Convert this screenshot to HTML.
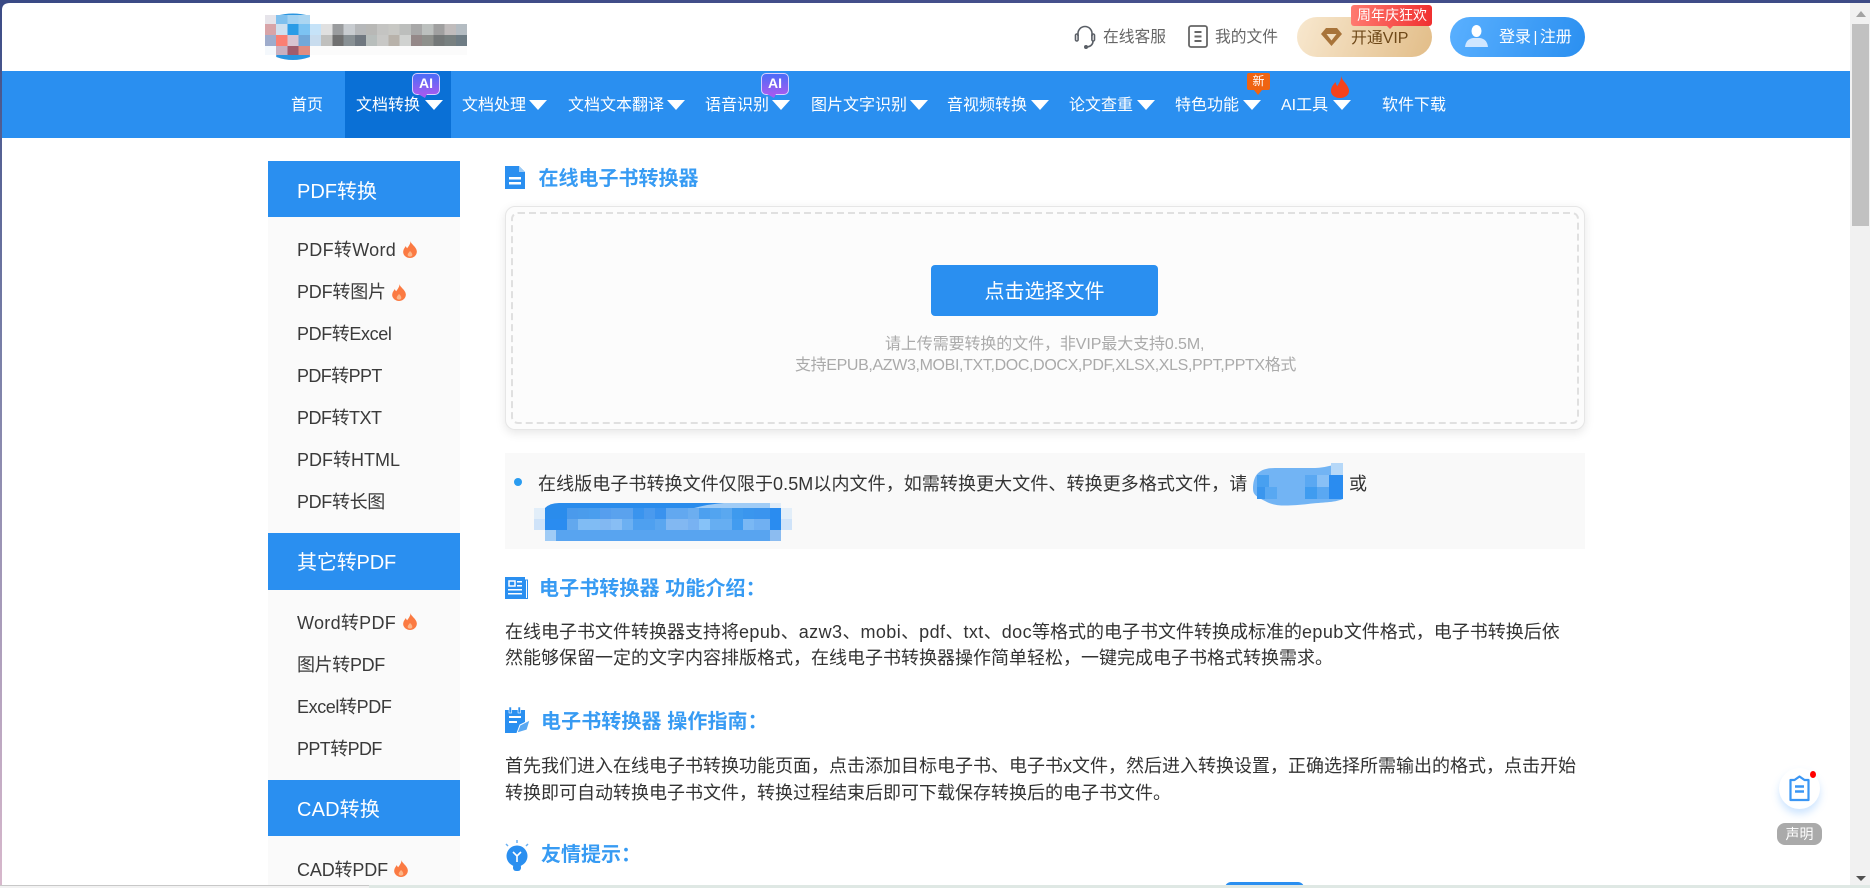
<!DOCTYPE html>
<html lang="zh"><head><meta charset="utf-8"><title>在线电子书转换器</title>
<style>
html,body{margin:0;padding:0;width:1870px;height:888px;overflow:hidden;background:#fff}
body{position:relative;font-family:"Liberation Sans","Noto Sans CJK SC",sans-serif;color:#333}
.a{position:absolute}
.t{position:absolute;white-space:nowrap}
.nav{color:#fff;font-size:16px;line-height:24px;top:94px}
.tri{position:absolute;top:100px;width:0;height:0;border-left:9px solid transparent;border-right:9px solid transparent;border-top:10px solid #fff}
.sh{position:absolute;left:268px;width:192px;background:#2a8ff0}
.st{position:absolute;left:297px;color:#fff;font-size:20px;line-height:30px;white-space:nowrap}
.si{position:absolute;left:297px;font-size:18px;line-height:26px;color:#3a3a3a;white-space:nowrap}
.h{position:absolute;font-size:20px;font-weight:700;color:#379bf3;line-height:28px;white-space:nowrap}
.p{position:absolute;left:505px;font-size:18px;line-height:26px;color:#333;white-space:nowrap}
.p span{letter-spacing:.42px}
.h2{position:absolute;font-size:16px;line-height:22px;color:#aaa;white-space:nowrap}
</style></head><body>

<!-- window frame -->
<div class="a" style="left:0;top:0;width:1870px;height:3px;background:linear-gradient(90deg,#3a4a85,#46508c 60%,#3d4b86)"></div>
<div class="a" style="left:0;top:0;width:2px;height:888px;background:linear-gradient(180deg,#3a4a85,#7a80a8 40%,#d8b8cc)"></div>
<svg class="a" style="left:0;top:0" width="10" height="10"><path d="M0 0H10V3Q2 3 2 10H0Z" fill="#3a4a85"/></svg>

<!-- logo mosaic -->
<svg class="a" style="left:265px;top:13px" width="202" height="47" viewBox="0 0 198 47" preserveAspectRatio="none" shape-rendering="crispEdges">
<path d="M11 3Q27 -2 44 3V44Q27 50 11 44Z" fill="#2a95e0" shape-rendering="auto"/>
<g>
<rect x="0" y="2" width="11" height="9" fill="#e6e4ea"/><rect x="11" y="2" width="11" height="9" fill="#7fc0ee"/><rect x="22" y="2" width="11" height="9" fill="#a3d2f2"/><rect x="33" y="2" width="11" height="9" fill="#acd6f2"/>
</g>
<g id="r1">
<rect x="0" y="11" width="11" height="11" fill="#d8a4a8"/><rect x="11" y="11" width="11" height="11" fill="#cfe0ef"/><rect x="22" y="11" width="11" height="11" fill="#2b9ce6"/><rect x="33" y="11" width="11" height="11" fill="#7cc3f2"/><rect x="44" y="11" width="11" height="11" fill="#c6e3f8"/><rect x="55" y="11" width="11" height="11" fill="#e0e0e0"/><rect x="66" y="11" width="11" height="11" fill="#9a9c9e"/><rect x="77" y="11" width="11" height="11" fill="#c8ccd0"/><rect x="88" y="11" width="11" height="11" fill="#b6b8ba"/><rect x="99" y="11" width="11" height="11" fill="#b8b8b6"/><rect x="110" y="11" width="11" height="11" fill="#c4c4c2"/><rect x="121" y="11" width="11" height="11" fill="#c8c8c4"/><rect x="132" y="11" width="11" height="11" fill="#bcbebc"/><rect x="143" y="11" width="11" height="11" fill="#a8a8a8"/><rect x="154" y="11" width="11" height="11" fill="#bcc0be"/><rect x="165" y="11" width="11" height="11" fill="#a0a0a0"/><rect x="176" y="11" width="11" height="11" fill="#c0bcbc"/><rect x="187" y="11" width="11" height="11" fill="#b4bcc2"/>
</g>
<g id="r2">
<rect x="0" y="22" width="11" height="11" fill="#9eaccc"/><rect x="11" y="22" width="11" height="11" fill="#fb7f72"/><rect x="22" y="22" width="11" height="11" fill="#d8c4d0"/><rect x="33" y="22" width="11" height="11" fill="#72a8d8"/><rect x="44" y="22" width="11" height="11" fill="#c8dcee"/><rect x="55" y="22" width="11" height="11" fill="#c0c0be"/><rect x="66" y="22" width="11" height="11" fill="#707070"/><rect x="77" y="22" width="11" height="11" fill="#889094"/><rect x="88" y="22" width="11" height="11" fill="#707880"/><rect x="99" y="22" width="11" height="11" fill="#b8bebc"/><rect x="110" y="22" width="11" height="11" fill="#c8c8c6"/><rect x="121" y="22" width="11" height="11" fill="#b8b2aa"/><rect x="132" y="22" width="11" height="11" fill="#d0d2d0"/><rect x="143" y="22" width="11" height="11" fill="#948888"/><rect x="154" y="22" width="11" height="11" fill="#8e908c"/><rect x="165" y="22" width="11" height="11" fill="#747878"/><rect x="176" y="22" width="11" height="11" fill="#788080"/><rect x="187" y="22" width="11" height="11" fill="#6e7c84"/>
</g>
<rect x="0" y="33" width="11" height="9" fill="#f4f8fc"/><rect x="11" y="33" width="11" height="9" fill="#c8b0c0"/><rect x="22" y="33" width="11" height="9" fill="#a05c6c"/><rect x="33" y="33" width="11" height="9" fill="#e08c80"/><rect x="44" y="33" width="154" height="9" fill="#fbfbfb"/>
</svg>

<!-- top right -->
<svg class="a" style="left:1074px;top:25px" width="22" height="24" viewBox="0 0 22 24" fill="none" stroke="#5a5f66" stroke-width="1.600"><path d="M4 11V8.500a7 7 0 0 1 14 0V11"/><rect x="1.500" y="9" width="2.600" height="7" rx="1.300"/><rect x="17.900" y="9" width="2.600" height="7" rx="1.300"/><path d="M19 16q0 5-6 6"/><circle cx="12" cy="22" r="1.200" fill="#5a5f66"/></svg>
<div class="t" style="left:1103px;top:26px;font-size:15.75px;line-height:24px;color:#666">在线客服</div>
<svg class="a" style="left:1188px;top:25px" width="20" height="23" viewBox="0 0 20 23" fill="none" stroke="#666" stroke-width="1.800"><rect x="1" y="1" width="18" height="21" rx="2"/><path d="M6.500 7h7M6.500 11.500h7M6.500 16h7" stroke-width="2"/></svg>
<div class="t" style="left:1215px;top:26px;font-size:15.75px;line-height:24px;color:#666">我的文件</div>

<div class="a" style="left:1297px;top:17px;width:135px;height:40px;border-radius:20px;background:linear-gradient(110deg,#f8e8cf,#e2bd88)"></div>
<svg class="a" style="left:1321px;top:28px" width="21" height="18" viewBox="0 0 21 18"><path d="M5 0H16L21 6 10.500 18 0 6Z" fill="#a8743a"/><path d="M5.500 6H15.500L10.500 12.500Z" fill="#f3dfc0"/></svg>
<div class="t" style="left:1351px;top:27px;font-size:16px;line-height:24px;color:#6e4818;letter-spacing:-.1px">开通VIP</div>
<div class="a" style="left:1351px;top:5px;width:81px;height:21px;border-radius:3px;background:linear-gradient(90deg,#ff7a70,#f03030)"></div>
<div class="a" style="left:1387px;top:26px;width:0;height:0;border-left:3px solid transparent;border-right:3px solid transparent;border-top:3px solid #f55"></div>
<div class="t" style="left:1357px;top:5px;font-size:14px;line-height:21px;color:#fff">周年庆狂欢</div>

<div class="a" style="left:1450px;top:17px;width:135px;height:40px;border-radius:20px;background:linear-gradient(110deg,#5ab0ff,#2a8ff0)"></div>
<svg class="a" style="left:1464px;top:25px" width="25" height="22" viewBox="0 0 25 22"><ellipse cx="12.500" cy="6" rx="5" ry="6" fill="#fff"/><path d="M1 22q1-8 8-9h7q7 1 8 9Z" fill="#cfe6ff"/></svg>
<div class="t" style="left:1499px;top:26px;font-size:16px;line-height:24px;color:#fff">登录<span style="margin:0 2.500px;font-size:15px">|</span>注册</div>

<!-- nav -->
<div class="a" style="left:2px;top:71px;width:1848px;height:67px;background:#2a8ff0"></div>
<div class="a" style="left:345px;top:71px;width:106px;height:67px;background:#0a70d6"></div>
<div class="t nav" style="left:291px">首页</div>
<div class="t nav" style="left:356px">文档转换</div><div class="tri" style="left:425px"></div>
<div class="t nav" style="left:462px">文档处理</div><div class="tri" style="left:529px"></div>
<div class="t nav" style="left:568px">文档文本翻译</div><div class="tri" style="left:667px"></div>
<div class="t nav" style="left:705px">语音识别</div><div class="tri" style="left:772px"></div>
<div class="t nav" style="left:811px">图片文字识别</div><div class="tri" style="left:910px"></div>
<div class="t nav" style="left:947px">音视频转换</div><div class="tri" style="left:1031px"></div>
<div class="t nav" style="left:1069px">论文查重</div><div class="tri" style="left:1137px"></div>
<div class="t nav" style="left:1175px">特色功能</div><div class="tri" style="left:1243px"></div>
<div class="t nav" style="left:1281px">AI工具</div><div class="tri" style="left:1333px"></div>
<div class="t nav" style="left:1382px">软件下载</div>

<!-- AI badges -->
<div class="a" style="left:412px;top:73px;width:26px;height:20px;border:1px solid #d8d0ff;border-radius:5px;background:linear-gradient(180deg,#4a6cf8,#a25cf0);box-sizing:content-box"></div>
<div class="a" style="left:418px;top:94px;width:0;height:0;border-left:7px solid transparent;border-right:2px solid transparent;border-top:4px solid #a25cf0"></div>
<div class="t" style="left:412px;top:73px;width:28px;text-align:center;font-size:14px;font-weight:700;line-height:21px;color:#fff">AI</div>
<div class="a" style="left:761px;top:73px;width:26px;height:20px;border:1px solid #d8d0ff;border-radius:5px;background:linear-gradient(180deg,#4a6cf8,#a25cf0)"></div>
<div class="a" style="left:767px;top:94px;width:0;height:0;border-left:7px solid transparent;border-right:2px solid transparent;border-top:4px solid #a25cf0"></div>
<div class="t" style="left:761px;top:73px;width:28px;text-align:center;font-size:14px;font-weight:700;line-height:21px;color:#fff">AI</div>

<!-- new badge -->
<div class="a" style="left:1247px;top:73px;width:23px;height:17px;background:#ef6412;border-radius:2px"></div>
<div class="a" style="left:1254px;top:90px;width:0;height:0;border-left:4px solid transparent;border-right:4px solid transparent;border-top:5px solid #ef6412"></div>
<div class="t" style="left:1247px;top:73px;width:23px;text-align:center;font-size:12px;line-height:17px;color:#fff">新</div>
<!-- flame -->
<svg class="a" style="left:1330px;top:75px" width="20" height="23" viewBox="0 0 20 23"><path d="M11 0C11 5 18 9 19 15 19.500 20 15 23 10 23S.5 20 1 15C1.500 11 4 9 5.500 7 6 9 6.500 10.500 7.500 11 9 8 11.500 5 11 0Z" fill="#f4431c"/></svg>

<!-- sidebar -->
<div class="a" style="left:268px;top:161px;width:192px;height:727px;background:#fafafa"></div>
<div class="sh" style="top:161px;height:56px"></div>
<div class="st" style="top:177px">PDF转换</div>
<div class="si" style="top:237px;letter-spacing:.3px">PDF转Word</div>
<div class="si" style="top:279px;letter-spacing:-.2px">PDF转图片</div>
<div class="si" style="top:321px;letter-spacing:-.4px">PDF转Excel</div>
<div class="si" style="top:363px;letter-spacing:-.6px">PDF转PPT</div>
<div class="si" style="top:405px;letter-spacing:-.5px">PDF转TXT</div>
<div class="si" style="top:447px">PDF转HTML</div>
<div class="si" style="top:489px;letter-spacing:-.35px">PDF转长图</div>
<div class="sh" style="top:533px;height:57px"></div>
<div class="st" style="top:548px;letter-spacing:-.15px">其它转PDF</div>
<div class="si" style="top:610px;letter-spacing:.3px">Word转PDF</div>
<div class="si" style="top:652px;letter-spacing:-.35px">图片转PDF</div>
<div class="si" style="top:694px;letter-spacing:-.4px">Excel转PDF</div>
<div class="si" style="top:736px;letter-spacing:-.6px">PPT转PDF</div>
<div class="sh" style="top:780px;height:56px"></div>
<div class="st" style="top:795px;letter-spacing:.15px">CAD转换</div>
<div class="si" style="top:857px;letter-spacing:-.15px">CAD转PDF</div>
<svg class="a" style="left:403px;top:241px" width="14" height="17" viewBox="0 0 14 17"><path d="M7.500 0c.2 3 5.700 5.500 6.300 10 .4 4-3 7-6.800 7S-.2 14 .2 10.500C.5 8 2 6.500 2.800 5c.4 1 .8 1.800 1.400 2.200C5.700 5 7.500 3 7.500 0Z" fill="#fb7a42"/><path d="M7 10c1 1 2.500 2.300 2.300 4.300C9 16 5 16 4.700 14.300 4.500 12.500 6 11.500 7 10Z" fill="#fcb688"/></svg>
<svg class="a" style="left:392px;top:284px" width="14" height="17" viewBox="0 0 14 17"><path d="M7.500 0c.2 3 5.700 5.500 6.300 10 .4 4-3 7-6.800 7S-.2 14 .2 10.500C.5 8 2 6.500 2.800 5c.4 1 .8 1.800 1.400 2.200C5.700 5 7.500 3 7.500 0Z" fill="#fb7a42"/><path d="M7 10c1 1 2.500 2.300 2.300 4.300C9 16 5 16 4.700 14.300 4.500 12.500 6 11.500 7 10Z" fill="#fcb688"/></svg>
<svg class="a" style="left:403px;top:613px" width="14" height="17" viewBox="0 0 14 17"><path d="M7.500 0c.2 3 5.700 5.500 6.300 10 .4 4-3 7-6.800 7S-.2 14 .2 10.500C.5 8 2 6.500 2.800 5c.4 1 .8 1.800 1.400 2.200C5.700 5 7.500 3 7.500 0Z" fill="#fb7a42"/><path d="M7 10c1 1 2.500 2.300 2.300 4.300C9 16 5 16 4.700 14.300 4.500 12.500 6 11.500 7 10Z" fill="#fcb688"/></svg>
<svg class="a" style="left:394px;top:860px" width="14" height="17" viewBox="0 0 14 17"><path d="M7.500 0c.2 3 5.700 5.500 6.300 10 .4 4-3 7-6.800 7S-.2 14 .2 10.500C.5 8 2 6.500 2.800 5c.4 1 .8 1.800 1.400 2.200C5.700 5 7.500 3 7.500 0Z" fill="#fb7a42"/><path d="M7 10c1 1 2.500 2.300 2.300 4.300C9 16 5 16 4.700 14.300 4.500 12.500 6 11.500 7 10Z" fill="#fcb688"/></svg>

<!-- main title -->
<svg class="a" style="left:505px;top:166px" width="20" height="23" viewBox="0 0 20 23"><path d="M0 0H14L20 6V23H0Z" fill="#2a8ff0"/><path d="M14 0L20 6H14Z" fill="#9ccbf6"/><rect x="4" y="11" width="12" height="2.500" fill="#fff"/><rect x="4" y="16" width="12" height="2.500" fill="#fff"/></svg>
<div class="h" style="left:538.500px;top:165px">在线电子书转换器</div>

<!-- upload -->
<div class="a" style="left:505px;top:206px;width:1080px;height:224px;box-sizing:border-box;border:1px solid #e6e6e6;border-radius:10px;background:#fcfcfc;box-shadow:0 3px 10px rgba(0,0,0,.1)"></div>
<svg class="a" style="left:511px;top:212px" width="1068" height="212" fill="none"><rect x="1" y="1" width="1066" height="210" rx="6" stroke="#e0e0e0" stroke-width="2" stroke-dasharray="7 4"/></svg>
<div class="a" style="left:931px;top:265px;width:227px;height:51px;background:#2a8ff0;border-radius:4px"></div>
<div class="t" style="left:931px;top:277px;width:227px;text-align:center;font-size:20px;line-height:30px;color:#fff">点击选择文件</div>
<div class="h2" style="left:885px;top:334px;letter-spacing:-.1px">请上传需要转换的文件，非VIP最大支持0.5M,</div>
<div class="h2" style="left:795px;top:355px;letter-spacing:-.36px">支持EPUB,AZW3,MOBI,TXT,DOC,DOCX,PDF,XLSX,XLS,PPT,PPTX格式</div>

<!-- notice -->
<div class="a" style="left:505px;top:453px;width:1080px;height:96px;background:#f9f9f9"></div>
<div class="a" style="left:514px;top:478px;width:8px;height:8px;border-radius:50%;background:#2a9cf0"></div>
<div class="t" style="left:538px;top:471px;font-size:18px;line-height:26px;color:#333;letter-spacing:.08px">在线版电子书转换文件仅限于0.5M以内文件，如需转换更大文件、转换更多格式文件，请</div>
<div class="t" style="left:1349px;top:471px;font-size:18px;line-height:26px;color:#333">或</div>
<!-- blur 1 -->
<svg class="a" style="left:1253px;top:463px" width="92" height="44" viewBox="0 0 92 44">
<path d="M0 26C0 12 6 5 22 5H60C72 5 78 2 90 0V36C80 40 70 39 55 41C35 43 22 44 12 38C4 34 0 32 0 26Z" fill="#72b4f4"/>
<rect x="4" y="12" width="12" height="12" fill="#48a0f0"/><rect x="4" y="24" width="8" height="12" fill="#3a96ee"/><rect x="12" y="24" width="12" height="12" fill="#58a8f2"/>
<rect x="52" y="12" width="12" height="12" fill="#5aa8f2"/><rect x="64" y="12" width="12" height="12" fill="#88c0f6"/><rect x="76" y="12" width="14" height="12" fill="#2a8cf0"/>
<rect x="52" y="24" width="12" height="12" fill="#3f9cf0"/><rect x="64" y="24" width="12" height="12" fill="#5aa8f2"/><rect x="76" y="24" width="14" height="12" fill="#2a8cf0"/>
<rect x="78" y="0" width="12" height="12" fill="#b6d8f8"/>
</svg>
<!-- blur 2 -->
<svg class="a" style="left:534px;top:503px" width="260" height="40" shape-rendering="crispEdges">
<path d="M11 5Q16 0 25 0H228L247 1V38H11Z" fill="#2a8cec" shape-rendering="auto"/>
<path d="M160 5Q175 1 190 0H236V5Z" fill="#a0ccf6" shape-rendering="auto"/>
<rect x="236" y="0" width="11" height="5" fill="#e0ecf8"/>
<rect x="0" y="5" width="11" height="11" fill="#e2eef9"/><rect x="0" y="16" width="11" height="11" fill="#cfe3f9"/>
<rect x="247" y="5" width="11" height="11" fill="#e2eef9"/><rect x="247" y="16" width="11" height="11" fill="#cfe3f9"/>
<rect x="11" y="5" width="22" height="11" fill="#2a8cec"/><rect x="33" y="5" width="11" height="11" fill="#4a9aec"/><rect x="44" y="5" width="11" height="11" fill="#4a9cec"/><rect x="55" y="5" width="11" height="11" fill="#4a9eee"/><rect x="66" y="5" width="11" height="11" fill="#569eee"/><rect x="77" y="5" width="22" height="11" fill="#5aa2ee"/><rect x="99" y="5" width="11" height="11" fill="#3a94ee"/><rect x="110" y="5" width="11" height="11" fill="#4a9aee"/><rect x="121" y="5" width="11" height="11" fill="#3a92ee"/><rect x="132" y="5" width="22" height="11" fill="#62a8f0"/><rect x="154" y="5" width="11" height="11" fill="#6caef0"/><rect x="165" y="5" width="11" height="11" fill="#4ca0f0"/><rect x="176" y="5" width="11" height="11" fill="#52a4f0"/><rect x="187" y="5" width="11" height="11" fill="#5aa8f0"/><rect x="198" y="5" width="11" height="11" fill="#3e9aee"/><rect x="209" y="5" width="11" height="11" fill="#3a96ee"/><rect x="220" y="5" width="16" height="11" fill="#3a94ee"/><rect x="236" y="5" width="11" height="11" fill="#2a8cf0"/>
<rect x="11" y="16" width="22" height="11" fill="#2a8cf0"/><rect x="33" y="16" width="11" height="11" fill="#62a8ee"/><rect x="44" y="16" width="22" height="11" fill="#80bcf4"/><rect x="66" y="16" width="11" height="11" fill="#82b8f2"/><rect x="77" y="16" width="11" height="11" fill="#88bef4"/><rect x="88" y="16" width="11" height="11" fill="#6cb0f2"/><rect x="99" y="16" width="22" height="11" fill="#4ea0f0"/><rect x="121" y="16" width="11" height="11" fill="#5aa6f0"/><rect x="132" y="16" width="22" height="11" fill="#82b8f2"/><rect x="154" y="16" width="11" height="11" fill="#78b2f2"/><rect x="165" y="16" width="11" height="11" fill="#86c2f8"/><rect x="176" y="16" width="22" height="11" fill="#66aef2"/><rect x="198" y="16" width="11" height="11" fill="#429cf0"/><rect x="209" y="16" width="11" height="11" fill="#7ab8f4"/><rect x="220" y="16" width="16" height="11" fill="#70b0f2"/><rect x="236" y="16" width="11" height="11" fill="#2a8cf0"/>
<rect x="11" y="27" width="11" height="11" fill="#a0ccf6"/><rect x="22" y="27" width="214" height="11" fill="#58a4f0"/><rect x="236" y="27" width="11" height="11" fill="#8cbcf0"/>
</svg>

<!-- section 1 -->
<svg class="a" style="left:505px;top:577px" width="23" height="22" viewBox="0 0 23 22"><rect x="0" y="0" width="20" height="22" fill="#2a8ff0"/><rect x="20.500" y="3" width="2" height="18.500" fill="none" stroke="#2a8ff0" stroke-width="1"/><rect x="4" y="4" width="6" height="5" fill="none" stroke="#fff" stroke-width="1.500"/><rect x="12" y="4" width="5" height="1.500" fill="#fff"/><rect x="12" y="8" width="5" height="1.500" fill="#fff"/><rect x="3" y="12" width="14" height="1.500" fill="#fff"/><rect x="3" y="16" width="14" height="1.500" fill="#fff"/></svg>
<div class="h" style="left:539px;top:575px;letter-spacing:.1px">电子书转换器 功能介绍：</div>
<div class="p" style="top:619px">在线电子书文件转换器支持将<span>epub</span>、<span>azw3</span>、<span>mobi</span>、<span>pdf</span>、<span>txt</span>、<span>doc</span>等格式的电子书文件转换成标准的<span>epub</span>文件格式，电子书转换后依</div>
<div class="p" style="top:645px">然能够保留一定的文字内容排版格式，在线电子书转换器操作简单轻松，一键完成电子书格式转换需求。</div>

<!-- section 2 -->
<svg class="a" style="left:505px;top:707px" width="25" height="26" viewBox="0 0 25 26"><path d="M0 3H20V15L13 26H0Z" fill="#2a8ff0"/><rect x="4" y="0" width="2.500" height="6" fill="#2a8ff0" stroke="#fff" stroke-width=".6"/><rect x="13" y="0" width="2.500" height="6" fill="#2a8ff0" stroke="#fff" stroke-width=".6"/><rect x="4" y="9" width="12" height="2" fill="#fff"/><rect x="4" y="14" width="8" height="2" fill="#fff"/><path d="M12 26L15 18 25 13 22 23Z" fill="#5aa8f2" stroke="#fff" stroke-width="1"/></svg>
<div class="h" style="left:541px;top:708px;letter-spacing:.1px">电子书转换器 操作指南：</div>
<div class="p" style="top:753px">首先我们进入在线电子书转换功能页面，点击添加目标电子书、电子书x文件，然后进入转换设置，正确选择所需输出的格式，点击开始</div>
<div class="p" style="top:780px">转换即可自动转换电子书文件，转换过程结束后即可下载保存转换后的电子书文件。</div>

<!-- section 3 -->
<svg class="a" style="left:505px;top:840px" width="24" height="31" viewBox="0 0 24 31"><circle cx="12" cy="16" r="10.500" fill="#2a8ff0"/><rect x="8" y="24" width="8" height="7" rx="3" fill="#2a8ff0"/><path d="M8 12l4 4 4-4M12 16v6" stroke="#fff" stroke-width="1.600" fill="none"/><path d="M12 0v3M1 4l2 2M23 4l-2 2" stroke="#6ab0f2" stroke-width="1.500"/></svg>
<div class="h" style="left:541px;top:841px">友情提示：</div>

<!-- bottom button remnant -->
<div class="a" style="left:1225px;top:882px;width:79px;height:6px;border-radius:14px 14px 0 0;background:#2a8ff0"></div>

<!-- float -->
<div class="a" style="left:1779px;top:768px;width:41px;height:41px;border-radius:50%;background:#fff;box-shadow:0 5px 8px rgba(80,160,255,.28)"></div>
<svg class="a" style="left:1789px;top:775px" width="21" height="27" viewBox="0 0 21 27" fill="none" stroke="#3a96f4" stroke-width="2.200"><path d="M5.500 5L10.500 1.500 15.500 5H19.500V25H1.500V5Z" stroke-linejoin="round"/><path d="M6 11.500h9M6 16.500h9" stroke-width="2.600"/></svg>
<div class="a" style="left:1810px;top:771px;width:6px;height:7px;border-radius:50%;background:#f00"></div>
<div class="a" style="left:1777px;top:823px;width:45px;height:22px;border-radius:8px;background:#aaa"></div>
<div class="t" style="left:1777px;top:823px;width:45px;text-align:center;font-size:14px;line-height:22px;color:#fff">声明</div>

<!-- scrollbar -->
<div class="a" style="left:1850px;top:3px;width:20px;height:882px;background:#f1f1f1"></div>
<div class="a" style="left:1852px;top:24px;width:17px;height:202px;background:#c1c1c1"></div>
<div class="a" style="left:1856px;top:11px;width:0;height:0;border-left:5px solid transparent;border-right:5px solid transparent;border-bottom:6px solid #a3a3a3"></div>
<div class="a" style="left:1856px;top:876px;width:0;height:0;border-left:5px solid transparent;border-right:5px solid transparent;border-top:5px solid #505050"></div>

<!-- bottom strip -->
<div class="a" style="left:369px;top:885px;width:1501px;height:3px;background:#dfe8e4"></div>
<div class="a" style="left:0;top:885px;width:369px;height:3px;background:#f2f2f2;border-top:1px solid #c8c8c8;box-sizing:border-box"></div>
</body></html>
